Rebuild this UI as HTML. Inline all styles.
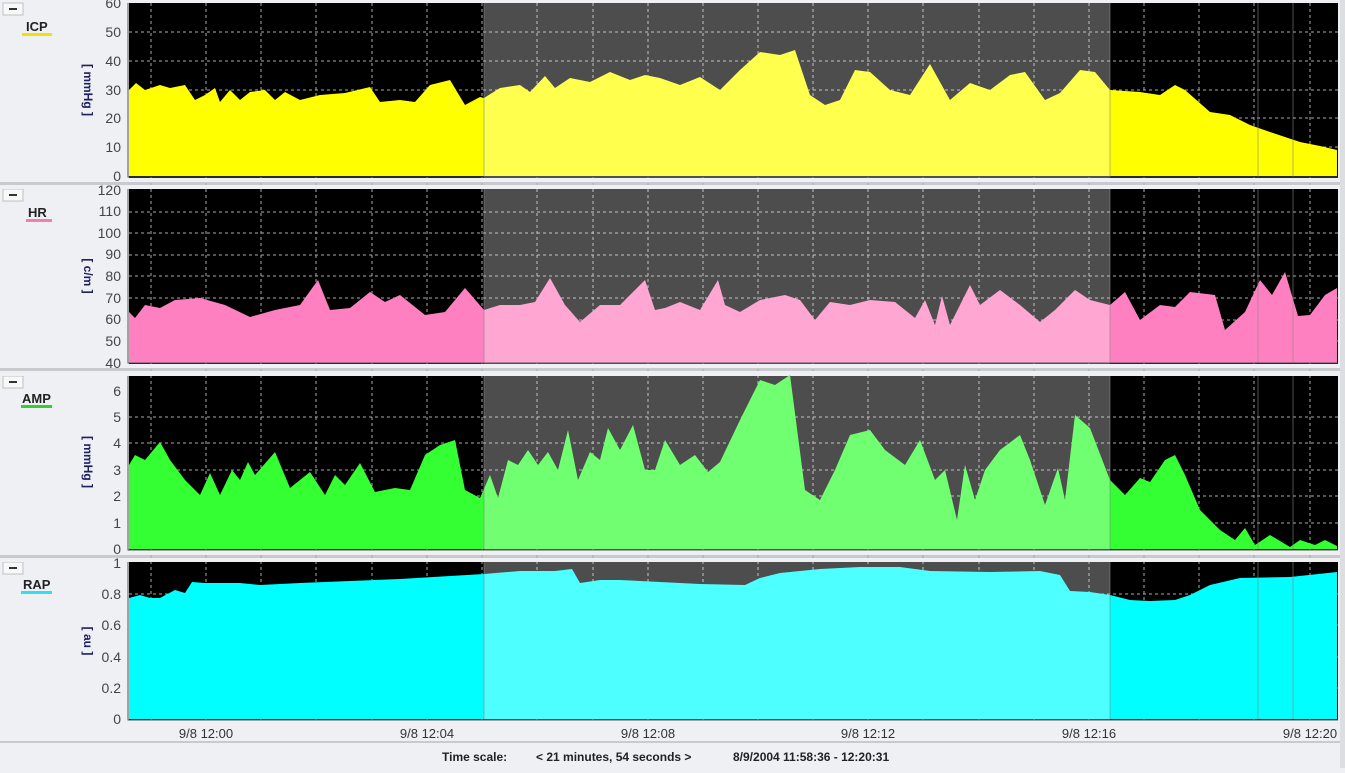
<!DOCTYPE html><html><head><style>
body{margin:0;width:1345px;height:768px;overflow:hidden;background:#eef0f4;font-family:"Liberation Sans",sans-serif}
</style></head><body>
<svg width="1345" height="768" xmlns="http://www.w3.org/2000/svg" font-family="Liberation Sans, sans-serif">
<rect width="1345" height="768" fill="#eef0f4"/>
<g fill="#c8cacc"><rect y="182" width="1345" height="3"/><rect y="368" width="1345" height="3"/><rect y="555" width="1345" height="3"/><rect y="741" width="1345" height="2"/></g>
<rect x="1340" y="0" width="5" height="768" fill="#dcdee2"/>
<g fill="#f8f8f8" stroke="#c0c0c0"><rect x="3" y="3" width="20" height="12"/><rect x="3" y="189" width="20" height="12"/><rect x="3" y="376" width="20" height="12"/><rect x="3" y="562" width="20" height="12"/></g>
<g fill="#333"><rect x="9" y="8" width="8" height="2"/><rect x="9" y="194" width="8" height="2"/><rect x="9" y="381" width="8" height="2"/><rect x="9" y="567" width="8" height="2"/></g>
<g font-weight="bold" font-size="13" fill="#222">
<text x="26" y="31">ICP</text><text x="28" y="217">HR</text><text x="22" y="403">AMP</text><text x="23" y="589">RAP</text></g>
<rect x="22" y="33" width="30" height="3" fill="#f2e200"/>
<rect x="26" y="219" width="26" height="3" fill="#f080b0"/>
<rect x="21" y="405" width="31" height="3" fill="#30d030"/>
<rect x="21" y="591" width="31" height="3" fill="#30e0f0"/>
<g font-size="12" font-weight="bold" fill="#202060">
<text transform="translate(84,90) rotate(90)" text-anchor="middle">[ mmHg ]</text>
<text transform="translate(84,276) rotate(90)" text-anchor="middle">[ c/m ]</text>
<text transform="translate(84,462) rotate(90)" text-anchor="middle">[ mmHg ]</text>
<text transform="translate(84,641) rotate(90)" text-anchor="middle">[ au ]</text></g>
<g fill="#000"><rect x="129" y="3" width="1209" height="175"/><rect x="129" y="189" width="1209" height="175"/><rect x="129" y="376" width="1209" height="174"/><rect x="129" y="562" width="1209" height="158"/></g>
<g stroke="#aaa" stroke-dasharray="3,3" stroke-width="1">
<path d="M151 3V720M206 3V720M261 3V720M316 3V720M372 3V720M427 3V720M482 3V720M537 3V720M593 3V720M648 3V720M703 3V720M758 3V720M813 3V720M868 3V720M923 3V720M979 3V720M1034 3V720M1089 3V720M1144 3V720M1199 3V720M1254 3V720M1310 3V720"/>
<path d="M129 32H1338M129 61H1338M129 90H1338M129 118H1338M129 147H1338"/>
<path d="M129 212H1338M129 233H1338M129 255H1338M129 276H1338M129 298H1338M129 320H1338M129 341H1338"/>
<path d="M129 417H1338M129 443H1338M129 470H1338M129 496H1338M129 523H1338"/>
<path d="M129 594H1338M129 625H1338M129 657H1338M129 688H1338"/>
</g>
<g fill="#eef0f4"><rect x="0" y="178" width="1340" height="4"/><rect x="0" y="364" width="1340" height="4"/><rect x="0" y="550" width="1340" height="5"/><rect x="0" y="185" width="1340" height="4"/><rect x="0" y="371" width="1340" height="5"/><rect x="0" y="558" width="1340" height="4"/></g>
<polygon fill="#ffff00" points="129,176 129,90 136,83 145,90 160,85 170,88 185,85 195,100 205,95 215,88 220,102 230,90 240,100 250,92 265,90 275,100 285,92 300,100 320,95 345,93 370,87 380,102 400,100 415,102 430,85 450,80 465,105 480,97 484,98 500,88 520,85 530,92 545,76 555,88 570,78 590,82 610,72 630,80 645,75 660,78 680,85 700,77 720,90 740,70 760,52 780,55 795,50 810,95 825,105 840,100 855,70 870,72 890,90 910,95 930,64 950,100 970,83 990,90 1010,75 1025,72 1045,100 1060,93 1080,70 1095,72 1110,90 1140,92 1160,95 1175,85 1185,90 1210,112 1230,115 1250,125 1270,132 1300,142 1320,146 1337,150 1337,176"/>
<polygon fill="#ff80c0" points="129,363 129,312 135,318 145,305 160,308 175,300 200,298 225,305 250,317 275,310 300,305 318,280 330,310 350,308 370,292 385,302 400,295 425,315 445,312 465,288 484,310 500,305 520,305 535,302 550,278 565,305 580,322 600,305 620,305 645,280 655,310 665,308 680,302 700,310 718,280 725,305 740,312 760,300 785,295 800,300 815,320 830,302 850,305 870,300 895,302 915,318 925,300 935,325 942,296 950,325 970,285 980,305 1000,290 1020,305 1040,322 1055,310 1075,290 1090,300 1110,305 1125,292 1140,320 1160,305 1175,307 1190,292 1215,295 1225,330 1245,312 1260,280 1272,295 1285,272 1298,316 1310,315 1325,295 1337,288 1337,363"/>
<polygon fill="#33ff33" points="129,549 129,465 135,455 145,460 160,442 170,460 185,480 200,495 210,473 220,495 232,470 240,480 248,462 255,475 275,452 290,488 310,472 325,495 335,475 345,485 360,463 375,492 395,488 410,490 425,455 440,445 455,440 465,490 480,498 490,475 498,498 508,460 518,465 528,450 538,465 548,452 558,470 568,430 578,480 590,452 600,460 608,428 620,450 633,425 645,470 655,470 665,440 680,465 695,455 708,472 720,462 740,420 760,380 775,385 790,375 805,490 820,500 835,470 850,435 870,430 885,450 905,465 920,440 935,480 945,470 957,520 965,465 975,500 985,470 1000,450 1020,435 1030,460 1045,505 1058,468 1065,500 1075,415 1090,428 1110,480 1125,495 1140,478 1150,482 1165,460 1175,455 1185,475 1200,510 1220,530 1235,540 1245,528 1255,545 1270,535 1290,547 1300,540 1315,545 1325,540 1337,546 1337,549"/>
<polygon fill="#00ffff" points="129,719 129,598 140,595 150,598 160,598 175,590 185,593 192,582 205,583 220,583 240,583 260,585 300,583 350,581 400,579 450,576 484,574 520,571 555,571 572,569 580,583 600,580 620,580 660,582 700,584 745,585 760,578 780,573 820,569 860,567 900,567 930,571 990,572 1040,571 1060,575 1070,591 1090,592 1110,595 1130,600 1150,601 1175,600 1190,595 1210,585 1240,578 1290,577 1337,572 1337,719"/>
<g fill="#fff" opacity="0.3"><rect x="484" y="3" width="626" height="175"/><rect x="484" y="189" width="626" height="175"/><rect x="484" y="376" width="626" height="174"/><rect x="484" y="562" width="626" height="158"/></g>
<g stroke="#888" stroke-width="1" opacity="0.6"><path d="M484 3V177M1110 3V177M1258 3V177M1293 3V177M484 189V363M1110 189V363M1258 189V363M1293 189V363M484 376V549M1110 376V549M1258 376V549M1293 376V549M484 562V719M1110 562V719M1258 562V719M1293 562V719"/></g>
<g stroke="#555" fill="none"><path d="M128 3V177H1338M128 189V363H1338M128 376V550H1338M128 562V720H1338"/></g>
<g font-size="14" fill="#444" text-anchor="end">
<text x="121" y="8">60</text><text x="121" y="37">50</text><text x="121" y="66">40</text><text x="121" y="95">30</text><text x="121" y="123">20</text><text x="121" y="152">10</text><text x="121" y="181">0</text>
<text x="121" y="195">120</text><text x="121" y="216">110</text><text x="121" y="238">100</text><text x="121" y="259">90</text><text x="121" y="281">80</text><text x="121" y="303">70</text><text x="121" y="324">60</text><text x="121" y="346">50</text><text x="121" y="368">40</text>
<text x="121" y="396">6</text><text x="121" y="422">5</text><text x="121" y="448">4</text><text x="121" y="475">3</text><text x="121" y="501">2</text><text x="121" y="528">1</text><text x="121" y="554">0</text>
<text x="121" y="568">1</text><text x="121" y="599">0.8</text><text x="121" y="630">0.6</text><text x="121" y="662">0.4</text><text x="121" y="693">0.2</text><text x="121" y="724">0</text></g>
<g font-size="13" fill="#333" text-anchor="middle">
<text x="206" y="738">9/8 12:00</text><text x="427" y="738">9/8 12:04</text><text x="648" y="738">9/8 12:08</text><text x="868" y="738">9/8 12:12</text><text x="1089" y="738">9/8 12:16</text><text x="1310" y="738">9/8 12:20</text></g>
<g font-size="12" font-weight="bold" fill="#222">
<text x="442" y="761">Time scale:</text><text x="536" y="761">&lt; 21 minutes, 54 seconds &gt;</text><text x="733" y="761">8/9/2004 11:58:36 - 12:20:31</text></g>
</svg>
</body></html>
